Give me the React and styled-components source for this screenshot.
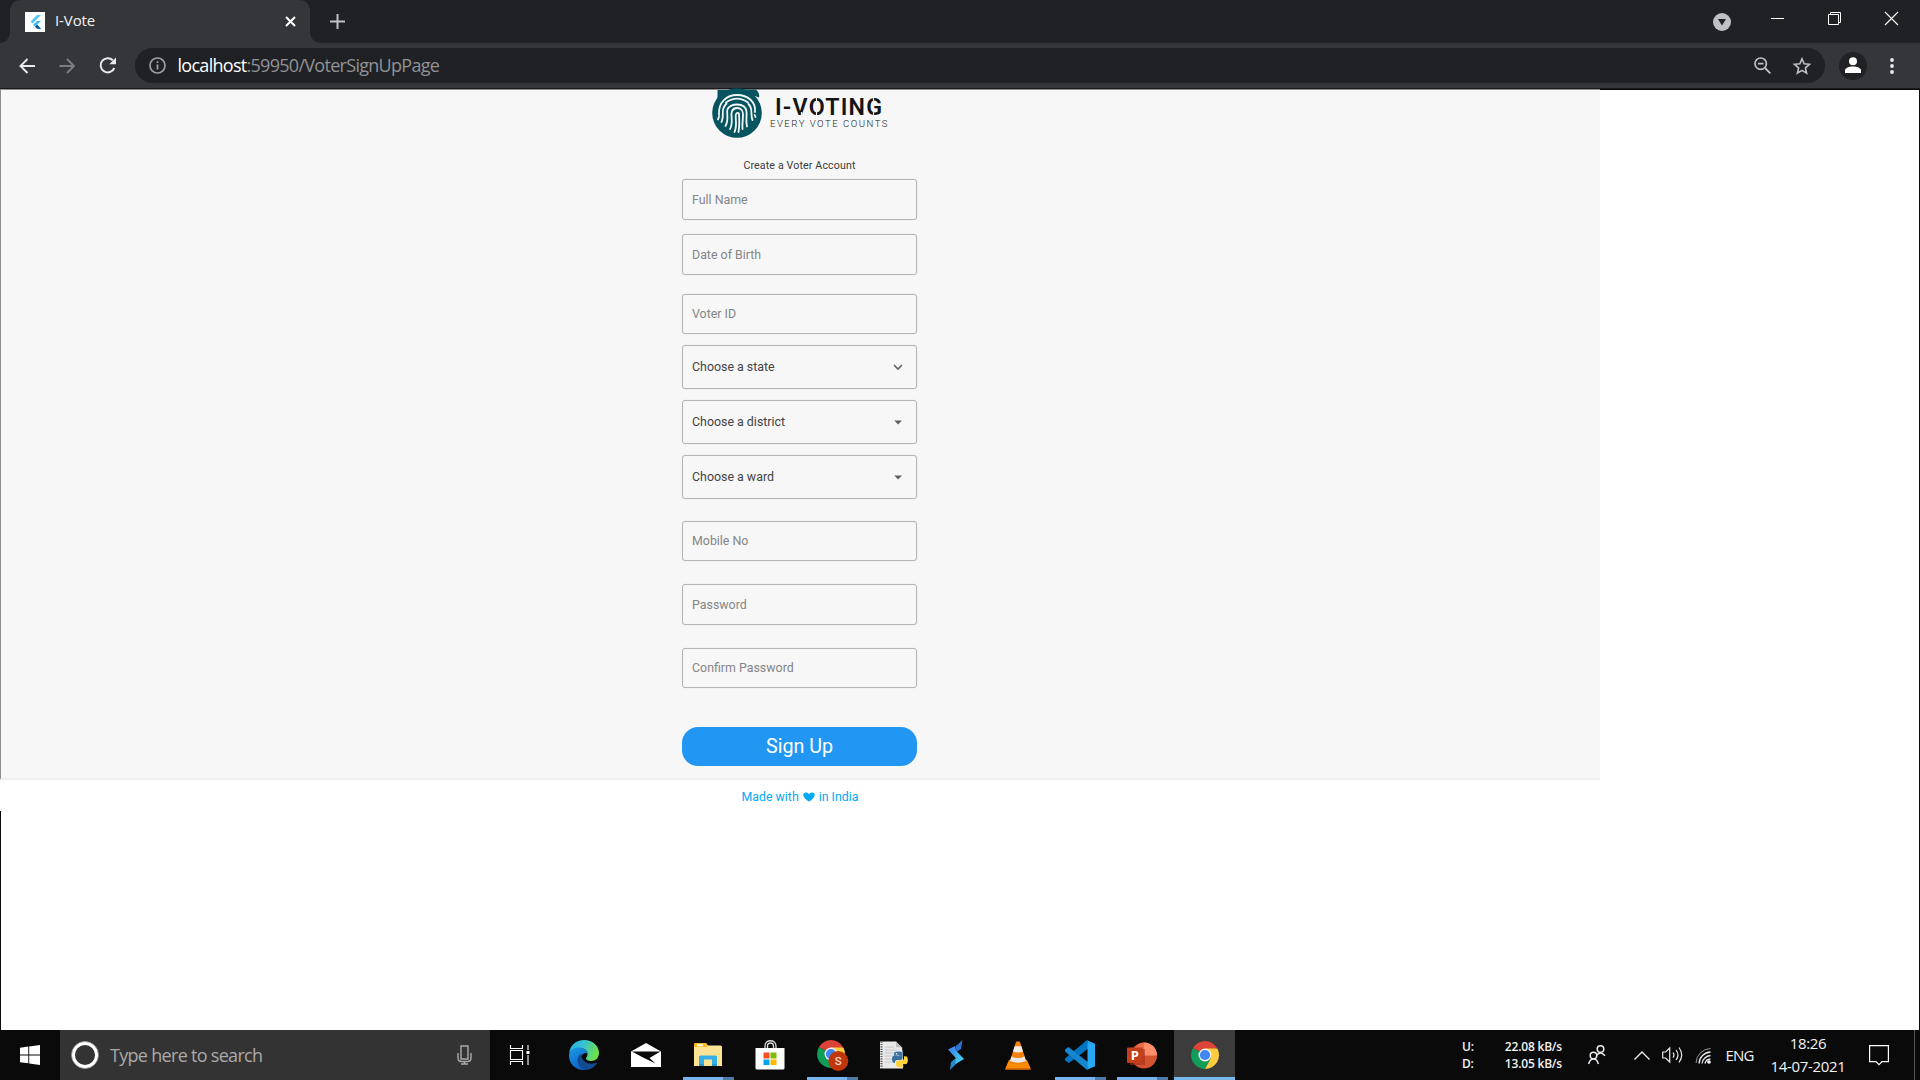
import React from "react";
import styled, { createGlobalStyle, css } from "styled-components";

const GlobalStyle = createGlobalStyle`
  * { box-sizing: border-box; }
  body { margin: 0; overflow: hidden; background: #fff; }
  svg { display: block; flex: none; overflow: visible; }
`;
const ui = `"Segoe UI", "Open Sans", "Noto Sans", sans-serif`;

const Screen = styled.div`
  width: 1920px; height: 1080px; display: flex; flex-direction: column;
  font-family: ${ui}; overflow: hidden;
`;

/* ---------- browser chrome ---------- */
const TabStrip = styled.header`
  height: 43px; flex: none; background: #202124; display: flex; align-items: stretch; padding-left: 10px;
`;
const Tab = styled.div`
  position: relative; width: 300px; display: flex; align-items: center; padding: 0 14px 0 15px;
  background: #35363a; border-radius: 10px 10px 0 0; color: #f1f3f4; font-size: 15px;
  &::before, &::after {
    content: ""; position: absolute; bottom: 0; width: 10px; height: 10px;
  }
  &::before { left: -10px; background: radial-gradient(circle at 0 0, #202124 9.5px, #35363a 10px); }
  &::after { right: -10px; background: radial-gradient(circle at 100% 0, #202124 9.5px, #35363a 10px); }
`;
const Favicon = styled.span`
  width: 20px; height: 20px; background: #fff; margin-right: 10px; flex: none; display: grid; place-items: center;
`;
const TabTitle = styled.span`flex: 1; letter-spacing: -0.1px; line-height: 20px; padding-bottom: 3px;`;
const NewTab = styled.div`width: 55px; display: grid; place-items: center;`;
const Spacer = styled.div`flex: 1;`;
const WindowButtons = styled.div`display: flex; align-items: center; padding-bottom: 6px;`;
const WindowButton = styled.span`width: 57px; display: grid; place-items: center;`;
const TabSearch = styled.span`width: 36px; margin-right: 9px; display: grid; place-items: center;`;

const Toolbar = styled.nav`
  height: 46px; flex: none; background: #35363a; border-bottom: 1px solid #1b1b1d;
  display: flex; align-items: center;
`;
const NavButton = styled.span`width: 40px; display: grid; place-items: center;`;
const NavGroup = styled.div`display: flex; padding-left: 7px; width: 135px;`;
const Omnibox = styled.div`
  width: 1690px; height: 35px; border-radius: 18px; background: #202124; display: flex; align-items: center;
  padding: 0 14px; color: #8f9296; font-size: 18px;
`;
const Url = styled.span`flex: 1; padding: 0 0 2px 11.5px; letter-spacing: -0.71px; line-height: 24px;`;
const Host = styled.span`color: #fff;`;
const OmniIcon = styled.span`margin-left: 22px;`;
const Avatar = styled.span`
  width: 28px; height: 28px; border-radius: 50%; background: #202124; margin-left: 14px;
  display: grid; place-items: center;
`;
const MenuDots = styled.span`margin-left: 23px;`;

/* ---------- page ---------- */
const Viewport = styled.main`
  height: 941px; flex: none; display: flex; flex-direction: column; align-items: flex-start;
  border-right: 1px solid #0a0a0a;
  background: linear-gradient(#0a0a0a, #0a0a0a) 1600px 0 / 320px 1px no-repeat #fff;
`;
const Panel = styled.section`
  width: 1600px; height: 691px; background: #f7f7f7; border-left: 1px solid #8e8e8e;
  border-top: 1px solid #8e8e8e; border-bottom: 2px solid #f0f0f0; padding-right: 2px;
  display: flex; flex-direction: column; align-items: center;
`;
const Footer = styled.div`
  width: 1600px; height: 31px; display: flex; justify-content: center; align-items: center; gap: 4px;
  padding-top: 2px; font: 400 12.35px/16px Roboto, sans-serif; color: #03a9f4;
`;
const EmptyArea = styled.div`width: 1px; flex: 1; background: #0a0a0a;`;
const Caption = styled.h1`
  margin: 15px 0 6px; font: 400 10.6px/14px Roboto, sans-serif; letter-spacing: 0.15px; color: #3a3a3a;
`;
const Field = styled.div`
  width: 235px; height: ${(p) => p.$h || 40}px; margin-top: ${(p) => p.$gap || 0}px; flex: none;
  border: 1px solid #b4b4b4; border-radius: 3px; box-shadow: 0 0 1px #c8c8c8;
  padding: 0 11px 0 9px; display: flex; align-items: center; justify-content: space-between;
  font: 400 12.4px/16px Roboto, sans-serif; letter-spacing: 0; color: #858585;
  ${(p) => p.$select && css`color: #444; padding-bottom: 1px;`}
`;
const SignUp = styled.button`
  width: 235px; height: 39px; margin-top: 39px; border: 0; border-radius: 16px; background: #2196f3;
  color: #fff; font: 400 19.7px/24px Roboto, sans-serif; padding: 0; flex: none;
`;

/* ---------- taskbar ---------- */
const Taskbar = styled.footer`
  height: 50px; flex: none; background: #0a0a0b; display: flex; align-items: stretch; color: #f2f2f2;
`;
const Start = styled.div`width: 60px; display: grid; place-items: center;`;
const Search = styled.div`
  width: 430px; background: #333; display: flex; align-items: center; padding: 0 18px 0 11px;
  font-size: 18px; color: #a9a9a9;
`;
const SearchText = styled.span`flex: 1; padding-left: 11px; letter-spacing: -0.7px;`;
const TaskView = styled.div`width: 63px; padding-left: 20px; display: flex; align-items: center;`;
const TaskbarApp = styled.div`
  width: 62px; position: relative; display: grid; place-items: center;
  ${(p) => p.$active && css`width: 61px; margin-left: 1px; background: #3c3c3c; border-bottom: 3px solid #76b9ed; padding-top: 3px;`}
  ${(p) => p.$open && css`
    &::after {
      content: ""; position: absolute; bottom: 0; left: 6px; width: 51px; height: 3px;
      background: linear-gradient(90deg, #7ab4ee 40px, #4f7aa5 40px);
    }
  `}
`;
const NetMeter = styled.div`
  width: 100px; display: grid; grid-template-columns: 30px 70px; align-content: center; row-gap: 1px;
  font-size: 12px; line-height: 16px; padding: 1px 0 0 1px; font-weight: 600; letter-spacing: -0.2px;
`;
const Right = styled.span`text-align: right;`;
const TrayCell = styled.div`width: ${(p) => p.$w}px; display: grid; place-items: center;`;
const Language = styled(TrayCell)`font-size: 15px; letter-spacing: -0.8px; padding: 0 6px 0 0;`;
const Clock = styled.div`
  width: 72px; display: flex; flex-direction: column; align-items: center; justify-content: center;
  font-size: 15px; line-height: 23px; letter-spacing: -0.35px; white-space: nowrap;
`;
const ShowDesktop = styled.div`width: 6px; border-left: 1px solid #555;`;

/* ---------- drawings ---------- */
const s = (w, extra) => ({ fill: "none", stroke: "#e8eaed", strokeWidth: w, ...extra });

const Flutter = () => (
  <svg width="12" height="16" viewBox="0 0 12 16">
    <path d="M8 1h4L3.6 9.5 1.6 7.5z" fill="#54c5f8" />
    <path d="M8 7h4L8.2 10.8 12 14.8H8.1L4.1 10.8z" fill="#43b9ee" />
    <path d="M6.2 12.8l2-2 3.8 4H8.1z" fill="#01579b" />
  </svg>
);

const Logo = () => (
  <svg width="196" height="54" viewBox="702 90 196 54">
    <path d="M717.5 90h37.500v10h-37.500z" fill="#05545f" />
    <path d="M740 89.500h16q4 4 3 8l-8-3z" fill="#05545f" />
    <path d="M726 90q5 3 12 3.500l13-3.500z" fill="#2c6b76" />
    <circle cx="737" cy="113" r="24.800" fill="#05545f" />
    <g fill="none" stroke="#f4f8f8" strokeWidth="1.800" strokeLinecap="round">
      <path d="M719 115c-1-13 8-20 18-20 11 0 19 7 18 17" />
      <path d="M726 102.500c7-5 15-5 22 0" />
      <path d="M721.500 122c3-7 0-9 2-14 1-2 2-3.500 3-4.500M748.500 104c1 1 1.500 2 2 3 2 4 0 9 2 13" />
      <path d="M725.500 126c4-7 .5-13 2-17 2-3 5-4.500 9.500-4.500 6 0 9 3 9.500 7 .5 5-1 9 .5 15" />
      <path d="M730 129c4-7 0-13 2-18 1-2 3-3 5-3 4 0 6 3 6 6 0 7-1 9-.5 15" />
      <path d="M734.500 132c3.500-8 0-14 1.500-18 .5-1.500 3-1.500 3 0 .5 7 .5 12-.5 18" />
      <path d="M718 119.500l1-3M755.500 117l-.8-2" />
    </g>
    <text x="775" y="115" textLength="107" lengthAdjust="spacing" fontFamily="Roboto, sans-serif" fontWeight="600" fontSize="23.200" fill="#141414">I-VOTING</text>
    <g stroke="#f7f7f7" strokeWidth="1.200">
      <path d="M801.500 112v4M816.500 97v4.500M816.500 111.500v5M873.500 97v4.500M873.500 112v4" />
    </g>
    <text x="770" y="127" textLength="117.500" lengthAdjust="spacing" fontFamily="Roboto, sans-serif" fontWeight="300" fontSize="9.600" fill="#222">EVERY VOTE COUNTS</text>
  </svg>
);

const Chevron = () => (
  <svg width="14" height="12" viewBox="0 0 14 12"><path d="M3 4l4 4 4-4" fill="none" stroke="#606060" strokeWidth="1.6" /></svg>
);
const Triangle = () => (
  <svg width="14" height="12" viewBox="0 0 14 12"><path d="M3.200 4.600h7.800L7.100 8.600z" fill="#606060" /></svg>
);

const Edge = () => (
  <svg width="30" height="30" viewBox="0 0 30 30">
    <defs>
      <linearGradient id="eg" x1="0" y1="0" x2="1" y2=".3"><stop offset="0" stopColor="#2ba9e8" /><stop offset=".5" stopColor="#36c2d2" /><stop offset="1" stopColor="#6be04c" /></linearGradient>
      <linearGradient id="eb" x1="0" y1="0" x2=".5" y2="1"><stop offset="0" stopColor="#1d9be6" /><stop offset="1" stopColor="#0c62c4" /></linearGradient>
    </defs>
    <path d="M0 14C1 5 7 0 15 0c9 0 15 6 15 13 0 5-3.500 8-8 8-3 0-5-1-5-2.500 0-1 1.500-2 1.500-4.500 0-4-4-6-8-6C6 8 1.500 10 0 14z" fill="url(#eg)" />
    <path d="M0 15C1 10 5 7.500 10 7.500c4 0 8 2.500 8.500 6-2-1.500-7 .5-7 6C11.500 26 17 30 17 30 7 31-.5 24 0 15z" fill="url(#eb)" />
    <path d="M12 13.500C6 18 8 28 17 30c5-.5 9-3 11.500-7.500-8 3-16 0-16.500-9z" fill="#114b91" />
  </svg>
);
const Mail = () => (
  <svg width="30" height="24" viewBox="0 0 30 24">
    <path d="M0 8.500L15 0l15 8.500V24H0z" fill="#fff" />
    <path d="M1 8.500h28.500L18.500 15l6 5.500L11 14z" fill="#0a0a0b" />
  </svg>
);
const Explorer = () => (
  <svg width="28" height="24" viewBox="0 0 28 24">
    <path d="M0 1.500Q0 0 1.500 0H12l2 2.500h12.500q1.500 0 1.500 1.500v19H0z" fill="#ffe394" />
    <path d="M0 1.500Q0 0 1.500 0H12l1.500 4H0z" fill="#f8ba1d" /><path d="M3 1.300h6v2H3z" fill="#fffbe8" />
    <path d="M5 23V14q0-1.500 1.500-1.500h15Q23 12.500 23 14v9h-5v-6.500h-8V23z" fill="#36b1e8" />
    <path d="M5 21h5v2H5zM18 21h5v2h-5z" fill="#249bd0" />
  </svg>
);
const Store = () => (
  <svg width="30" height="30" viewBox="0 0 30 30">
    <path d="M10 8V6c0-7 11-7 11 0v2M12.500 8V6c0-4 6-4 6 0v2" {...s(1.3, { stroke: "#ddd" })} />
    <path d="M.5 8h29v20q0 1.500-1.500 1.500H2Q.5 29.500.5 28z" fill="#fff" />
    <path d="M8.500 12.500h6v6h-6z" fill="#f25022" /><path d="M15.500 12.500h6v6h-6z" fill="#7fba00" />
    <path d="M8.500 19.500h6v5.500h-6z" fill="#00a4ef" /><path d="M15.500 19.500h6v5.500h-6z" fill="#ffb900" />
  </svg>
);
const Chrome = ({ badge }) => (
  <svg width={badge ? 31 : 28} height={badge ? 31 : 28} viewBox={badge ? "0 0 31 31" : "0 0 28 28"}>
    <path d="M14 14L1.900 7A14 14 0 0 1 26.100 7z" fill="#db4437" />
    <path d="M14 14L1.900 7A14 14 0 0 0 14 28l5.500-10.500z" fill="#0f9d58" />
    <path d="M14 7.500h12.400A14 14 0 0 1 14 28l5.700-10.500z" fill="#ffcd40" />
    <circle cx="14" cy="14" r="6.500" fill="#f1f1f1" /><circle cx="14" cy="14" r="5.100" fill="#4285f4" />
    {badge && (<>
      <circle cx="21.300" cy="21" r="10" fill="#bf360c" />
      <text x="21.300" y="25" textAnchor="middle" fontFamily="Roboto, sans-serif" fontSize="11.500" fontWeight="500" fill="#f3d3c8">S</text>
    </>)}
  </svg>
);
const PythonFile = () => (
  <svg width="28" height="29" viewBox="0 0 28 29">
    <path d="M0 .5h16l6 6 1 8v13H0z" fill="#e9e9e9" /><path d="M16 .5v5.500l6 .5z" fill="#bbb" />
    <path d="M1.500.5v27.500" stroke="#555" strokeWidth="2" strokeDasharray="1.200 1.200" />
    <path d="M5 6h9M5 9h12M5 12h10M5 15h8M5 18h8M5 21h9" stroke="#c6c6c6" strokeWidth="1" />
    <path d="M14 14.500v-2q0-2 4-2h1.500q3 0 3 2.500v4q0 2-2 2h-3.500q-2 0-2 2V22q-3 0-3-4 0-3.500 3-3.500h4.500v-.7z" fill="#36719f" />
    <path d="M27 15.500q2 5-.5 7.500l-4 .2v1q2 1 0 2-2.500.8-5.500-.4-1-.6-1-2.200v-2.200q0-2 2-2h4q2 0 2-2v-2.200z" fill="#ffd43b" />
    <circle cx="16.500" cy="12.700" r=".8" fill="#fff" />
  </svg>
);
const Bolt = () => (
  <svg width="16" height="30" viewBox="0 0 16 30">
    <defs><linearGradient id="sb" x1="0" y1="0" x2="1" y2="1"><stop offset="0" stopColor="#3f76ef" /><stop offset="1" stopColor="#42dff0" /></linearGradient></defs>
    <path d="M14.500 0L13 9 8.500 12 7.500 6.500z" fill="#2d72cf" /><path d="M2 30l1-8 5-4 1 5z" fill="#2588ce" />
    <path d="M0 9.500L7 6l1 4.500 8 8.500-8.500 5L7.800 18z" fill="url(#sb)" />
  </svg>
);
const Vlc = () => (
  <svg width="26" height="29" viewBox="0 0 26 29">
    <path d="M4 19h18l3.500 8v1.500H.5V27z" fill="#f88b08" /><path d="M.5 27h25v1.500H.5z" fill="#d96b00" />
    <path d="M11 1q2-1.500 4 0l6.500 20q-8.500 5-17 0z" fill="#f57f0a" />
    <path d="M9.700 5.200h6.600L18 10.500q-5 2-10 0z" fill="#eee" /><path d="M6.500 15.500q6.500 3 13 0l1.500 4.500q-8 3.500-16 0z" fill="#e8e8e8" />
  </svg>
);
const VsCode = () => (
  <svg width="30" height="30" viewBox="0 0 30 30">
    <path d="M22 0l2 8L4 23 0 20.500v-2z" fill="#0074c2" /><path d="M0 11.500v-2L3.500 7 24 23l-2 7z" fill="#1687cf" />
    <path d="M21.500 0L30 3.800v22.400L21.500 30q1 0 1-2V2q0-2-1-2z" fill="#2aa7f2" />
  </svg>
);
const PowerPoint = () => (
  <svg width="30" height="27" viewBox="0 0 30 27">
    <circle cx="17" cy="13.500" r="13" fill="#d35230" /><path d="M17 .5a13 13 0 0 1 13 13H17z" fill="#ff8f6b" />
    <path d="M17 .5v13H5A13 13 0 0 1 17 .5z" fill="#ed6c47" /><rect x="3" y="7" width="15" height="16" fill="#9d3018" opacity=".6" />
    <rect y="5.500" width="15.500" height="15.500" rx="1" fill="#c43e1c" />
    <text x="7.800" y="18" textAnchor="middle" fontFamily="Open Sans, sans-serif" fontSize="13" fontWeight="700" fill="#fff">P</text>
  </svg>
);

const APPS = [
  { icon: <Edge /> }, { icon: <Mail /> }, { icon: <Explorer />, open: true }, { icon: <Store /> },
  { icon: <Chrome badge />, open: true }, { icon: <PythonFile /> }, { icon: <Bolt /> }, { icon: <Vlc /> },
  { icon: <VsCode />, open: true }, { icon: <PowerPoint />, open: true }, { icon: <Chrome />, active: true },
];

const FIELDS = [
  { label: "Full Name", h: 41 },
  { label: "Date of Birth", gap: 14, h: 41 },
  { label: "Voter ID", gap: 19 },
  { label: "Choose a state", gap: 11, h: 44, icon: <Chevron /> },
  { label: "Choose a district", gap: 11, h: 44, icon: <Triangle /> },
  { label: "Choose a ward", gap: 11, h: 44, icon: <Triangle /> },
  { label: "Mobile No", gap: 22 },
  { label: "Password", gap: 23, h: 41 },
  { label: "Confirm Password", gap: 23 },
];

export default function App() {
  return (
    <Screen>
      <GlobalStyle />
      <TabStrip>
        <Tab>
          <Favicon><Flutter /></Favicon>
          <TabTitle>I-Vote</TabTitle>
          <svg width="11" height="11" viewBox="0 0 11 11"><path d="M1 1l9 9M10 1l-9 9" {...s(2, { stroke: "#fff" })} /></svg>
        </Tab>
        <NewTab><svg width="15" height="15" viewBox="0 0 15 15"><path d="M7.500 0v15M0 7.500h15" {...s(2, { stroke: "#bdc1c6" })} /></svg></NewTab>
        <Spacer />
        <TabSearch>
          <svg width="18" height="18" viewBox="0 0 18 18"><circle cx="9" cy="9" r="9" fill="#bdc1c6" /><path d="M5 6h8l-4 6.500z" fill="#202124" /></svg>
        </TabSearch>
        <WindowButtons>
          <WindowButton><svg width="13" height="13" viewBox="0 0 13 13"><path d="M0 6.500h13" {...s(1, { stroke: "#fff" })} /></svg></WindowButton>
          <WindowButton><svg width="14" height="13" viewBox="0 0 14 13"><path d="M.5 2.500h10v10H.5zM2.500 2.500v-2h10v10h-2" {...s(1, { stroke: "#fff" })} /></svg></WindowButton>
          <WindowButton><svg width="13" height="13" viewBox="0 0 13 13"><path d="M0 0l13 13M13 0L0 13" {...s(1.1, { stroke: "#fff" })} /></svg></WindowButton>
        </WindowButtons>
      </TabStrip>
      <Toolbar>
        <NavGroup>
          <NavButton><svg width="16" height="16" viewBox="0 0 16 16"><path d="M16 8H1.500M8.500 1L1.500 8l7 7" {...s(1.9)} /></svg></NavButton>
          <NavButton><svg width="16" height="16" viewBox="0 0 16 16"><path d="M.5 8H15M8 1l7 7-7 7" {...s(1.9, { stroke: "#7c7e82" })} /></svg></NavButton>
          <NavButton><svg width="17" height="17" viewBox="0 0 17 17"><path d="M13.800 3.300A7.100 7.100 0 1 0 15.300 11" {...s(2)} /><path d="M17 .6v6.700h-6.700z" fill="#e8eaed" /></svg></NavButton>
        </NavGroup>
        <Omnibox>
          <svg width="17" height="17" viewBox="0 0 17 17"><circle cx="8.500" cy="8.500" r="7.500" {...s(1.7, { stroke: "#9aa0a6" })} /><path d="M8.500 7.500v5M8.500 4.300v1.800" {...s(1.8, { stroke: "#9aa0a6" })} /></svg>
          <Url><Host>localhost</Host>:59950/VoterSignUpPage</Url>
          <svg width="17" height="17" viewBox="0 0 17 17"><circle cx="6.700" cy="6.700" r="5.700" {...s(1.7, { stroke: "#bdc1c6" })} /><path d="M4 6.700h5.500M11 11l5.300 5.300" {...s(1.8, { stroke: "#bdc1c6" })} /></svg>
          <OmniIcon><svg width="18" height="18" viewBox="0 0 18 18"><path d="M9 1.800l2.100 5 5.400.5-4.100 3.600 1.200 5.300L9 13.400l-4.600 2.800 1.200-5.300L1.500 7.300l5.400-.5z" {...s(1.6, { stroke: "#bdc1c6" })} /></svg></OmniIcon>
        </Omnibox>
        <Avatar><svg width="16" height="17" viewBox="0 0 16 17"><circle cx="8" cy="4.200" r="4" fill="#fff" /><path d="M0 16v-2.500C0 11 4 9.500 8 9.500s8 1.500 8 4V16z" fill="#fff" /></svg></Avatar>
        <MenuDots><svg width="4" height="16" viewBox="0 0 4 16"><circle cx="2" cy="2" r="1.900" fill="#e8eaed" /><circle cx="2" cy="8" r="1.900" fill="#e8eaed" /><circle cx="2" cy="14" r="1.900" fill="#e8eaed" /></svg></MenuDots>
      </Toolbar>

      <Viewport>
        <Panel>
          <Logo />
          <Caption>Create a Voter Account</Caption>
          {FIELDS.map((f) => (
            <Field key={f.label} $h={f.h} $gap={f.gap} $select={!!f.icon}><span>{f.label}</span>{f.icon}</Field>
          ))}
          <SignUp>Sign Up</SignUp>
        </Panel>
        <Footer>
          <span>Made with</span>
          <svg width="12" height="10" viewBox="0 0 12 10"><path d="M6 9.600C3 7.600.3 5.400.3 2.900.3.200 4.300-.3 6 2.200 7.700-.3 11.700.200 11.700 2.900 11.700 5.400 9 7.600 6 9.600z" fill="#03a9f4" /></svg>
          <span>in India</span>
        </Footer>
        <EmptyArea />
      </Viewport>

      <Taskbar>
        <Start><svg width="20" height="20" viewBox="0 0 20 20"><path d="M0 2.800L8.300 1.600v7.900H0zM9.200 1.500L20 0v9.500H9.200zM0 10.400h8.300v7.900L0 17.200zM9.200 10.400H20V20L9.200 18.500z" fill="#fff" /></svg></Start>
        <Search>
          <svg width="28" height="28" viewBox="0 0 27 27"><circle cx="13.500" cy="13.500" r="11.300" {...s(3.200, { stroke: "#fff" })} /><circle cx="13.500" cy="13.500" r="13" {...s(0.8, { stroke: "#999" })} /></svg>
          <SearchText>Type here to search</SearchText>
          <svg width="15" height="20" viewBox="0 0 15 20"><path d="M4 1h7v13H4zM1 8v5q0 3.500 3.500 3.500h6q3.500 0 3.500-3.500V8M7.500 16.500V19M4 19h7" {...s(1.4, { stroke: "#aaa" })} /></svg>
        </Search>
        <TaskView>
          <svg width="20" height="20" viewBox="0 0 20 20"><path d="M.5 0v3.500h12V0M.5 5.500h12v9H.5zM.5 20v-3.500h12V20M18 0v5M18 10v10" {...s(1.1, { stroke: "#fff" })} /><path d="M16.500 6h3v3h-3z" fill="#fff" /></svg>
        </TaskView>
        {APPS.map((a, i) => <TaskbarApp key={i} $open={a.open} $active={a.active}>{a.icon}</TaskbarApp>)}
        <Spacer />
        <NetMeter><span>U:</span><Right>22.08 kB/s</Right><span>D:</span><Right>13.05 kB/s</Right></NetMeter>
        <TrayCell $w={72}>
          <svg width="18" height="20" viewBox="0 0 18 20"><circle cx="12.500" cy="4" r="3.300" {...s(1.5)} /><path d="M9 10q3.500-4.500 8 .8" {...s(1.5)} /><circle cx="5.500" cy="10.500" r="3.300" {...s(1.5)} /><path d="M.7 19q1-5 4.800-5t4.800 5" {...s(1.5)} /></svg>
        </TrayCell>
        <TrayCell $w={18}><svg width="16" height="9" viewBox="0 0 16 9"><path d="M.5 8.500L8 1l7.500 7.500" {...s(1.4)} /></svg></TrayCell>
        <TrayCell $w={42}>
          <svg width="21" height="18" viewBox="0 0 21 18"><path d="M.7 6v6h3l4 4V2l-4 4z" {...s(1.2)} /><path d="M11 6.500q2 2.500 0 5M14 4q4 5 0 10M17 1.500q5.500 7.500 0 15" {...s(1.2)} /></svg>
        </TrayCell>
        <TrayCell $w={20}>
          <svg width="17" height="17" viewBox="0 0 17 17"><path d="M1 16A15 15 0 0 1 15.500 1.500" {...s(1, { stroke: "#999" })} /><path d="M4 16.500A12 12 0 0 1 15.500 5M7 16.500A9 9 0 0 1 15.500 8.500M10 16.500A6 6 0 0 1 15.500 12" {...s(1.3)} /><circle cx="14" cy="15" r="1.800" fill="#fff" /></svg>
        </TrayCell>
        <Language $w={59}>ENG</Language>
        <Clock><span>18:26</span><span>14-07-2021</span></Clock>
        <TrayCell $w={70}>
          <svg width="20" height="20" viewBox="0 0 20 20"><path d="M.6.600h18.800v16H13l-3 3-3-3H.6z" {...s(1.2, { stroke: "#fff" })} /></svg>
        </TrayCell>
        <ShowDesktop />
      </Taskbar>
    </Screen>
  );
}
